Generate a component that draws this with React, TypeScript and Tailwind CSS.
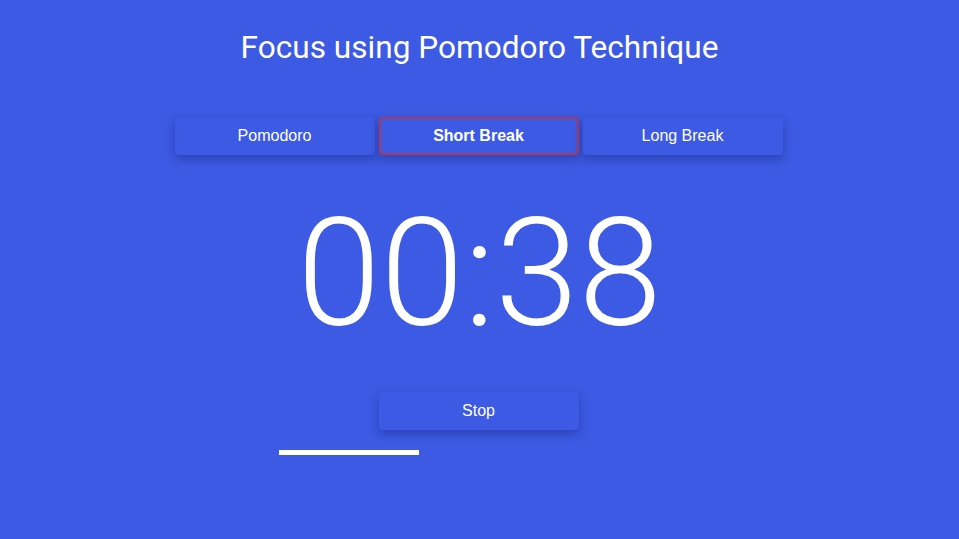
import React, { useState } from "react";

const modes = ["Pomodoro", "Short Break", "Long Break"];

const App = () => {
  const [mode, setMode] = useState("Short Break");
  const progress = 35;

  return (
    <div className="min-h-screen w-full bg-[#3c5ae3] flex flex-col items-center pt-[32px] font-['Liberation_Sans',Arial,sans-serif] text-white">
      <h1 className="text-[31.6px] leading-none h-[32px] font-['Roboto',sans-serif] font-normal">
        Focus using Pomodoro Technique
      </h1>

      <div className="mt-[53px] mr-[2px] flex gap-[4px]">
        {modes.map((m) => (
          <button
            key={m}
            onClick={() => setMode(m)}
            className={`w-[200px] h-[38px] rounded-[4px] bg-[#3c5ae3] text-[16px] shadow-[0_4px_10px_rgba(15,25,90,0.35)] ${
              mode === m ? "font-bold border-2 border-[#a63a62]" : "font-normal"
            }`}
          >
            {m}
          </button>
        ))}
      </div>

      <div className="mt-[44px] h-[150px] text-[150px] leading-none font-['Roboto',sans-serif] font-light">
        00:38
      </div>

      <button className="mt-[43px] mr-[2px] w-[200px] h-[38px] rounded-[4px] bg-[#3c5ae3] text-[16px] shadow-[0_4px_10px_rgba(15,25,90,0.35)]">
        Stop
      </button>

      <div className="mt-[20px] mr-[2px] w-[400px] h-[5px]">
        <div className="h-full bg-white" style={{ width: `${progress}%` }} />
      </div>
    </div>
  );
};

export default App;
